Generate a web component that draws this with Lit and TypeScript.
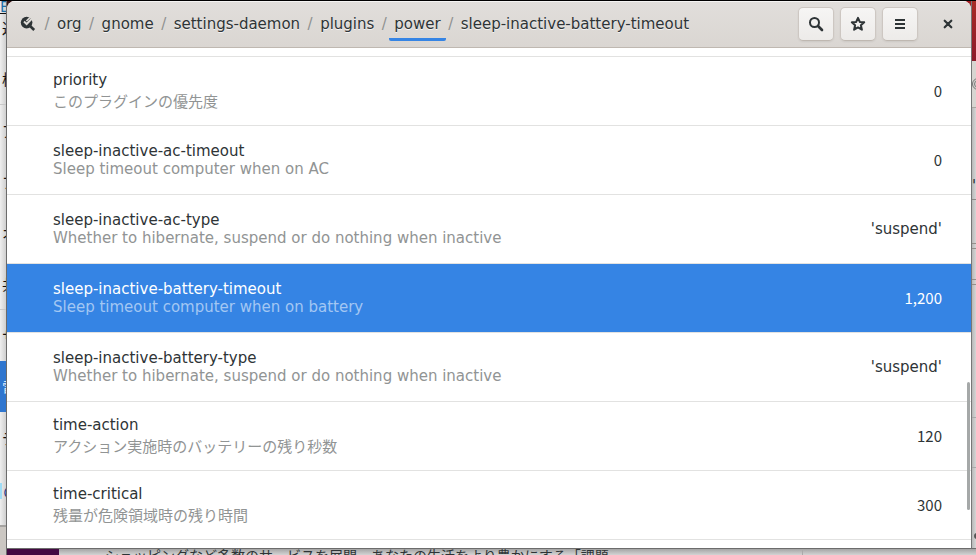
import { LitElement, html, css, svg } from "lit";
import { customElement, property } from "lit/decorators.js";
import { classMap } from "lit/directives/class-map.js";

interface Key {
  name: string;
  summary: string;
  value: string;
  selected?: boolean;
}

const KEYS: Key[] = [
  { name: "priority", summary: "このプラグインの優先度", value: "0" },
  { name: "sleep-inactive-ac-timeout", summary: "Sleep timeout computer when on AC", value: "0" },
  { name: "sleep-inactive-ac-type", summary: "Whether to hibernate, suspend or do nothing when inactive", value: "'suspend'" },
  { name: "sleep-inactive-battery-timeout", summary: "Sleep timeout computer when on battery", value: "1,200", selected: true },
  { name: "sleep-inactive-battery-type", summary: "Whether to hibernate, suspend or do nothing when inactive", value: "'suspend'" },
  { name: "time-action", summary: "アクション実施時のバッテリーの残り秒数", value: "120" },
  { name: "time-critical", summary: "残量が危険領域時の残り時間", value: "300" },
];

const PATH = ["org", "gnome", "settings-daemon", "plugins", "power", "sleep-inactive-battery-timeout"];

const PANELS = [
  { label: "通", first: true },
  { label: "検", last: true },
  { label: "ア" },
  { label: "プ" },
  { label: "オ" },
  { label: "共", last: true },
  { label: "サ" },
  { label: "電", active: true },
  { label: "デ" },
];

const icons = {
  root: svg`<circle cx="6.6" cy="6.6" r="5.8" fill="currentColor"/>
    <path d="M9.5 9.5 14.2 14" stroke="currentColor" stroke-width="2.6"/>
    <path d="M4 5.6 6.6 8 12.5 2" fill="none" stroke="#dedbd7" stroke-width="2"/>
    <path d="M6.4 5 10 1.6" stroke="#dedbd7" stroke-width="1.6"/>`,
  search: svg`<circle cx="6.5" cy="6.5" r="4.5" fill="none" stroke="currentColor" stroke-width="2"/>
    <path d="M10 10 14 14" stroke="currentColor" stroke-width="2.6" stroke-linecap="round"/>`,
  star: svg`<path d="M8 1.8 9.8 5.9 14.2 6.3 10.9 9.2 11.9 13.7 8 11.4 4.1 13.7 5.1 9.2 1.8 6.3 6.2 5.9Z" fill="none" stroke="currentColor" stroke-width="2" stroke-linejoin="round"/>`,
  menu: svg`<path d="M3 3h10v2H3zM3 7h10v2H3zM3 11h10v2H3z" fill="currentColor"/>`,
  close: svg`<path d="M4.7 4.7 11.3 11.3M11.3 4.7 4.7 11.3" stroke="currentColor" stroke-width="2.2" stroke-linecap="round"/>`,
};

const icon = (name: keyof typeof icons) =>
  html`<svg class="icon" viewBox="0 0 16 16" width="16" height="16" aria-hidden="true">${icons[name]}</svg>`;

@customElement("path-bar")
class PathBar extends LitElement {
  static styles = css`
    :host { display: flex; align-items: stretch; min-width: 0; }
    nav { display: flex; align-items: stretch; }
    .root, .crumb {
      display: flex;
      align-items: center;
      color: #2e3436;
      text-decoration: none;
      white-space: nowrap;
      text-shadow: 0 1px rgba(255, 255, 255, 0.7);
      border-block: 3px solid transparent;
      padding: 0 5px;
    }
    .root { padding-right: 6px; }
    .current { border-bottom-color: #3584e4; border-radius: 0 0 2px 2px; }
    .slash { display: flex; align-items: center; width: 10px; justify-content: center; color: #8f9190; }
    .icon { display: block; }
  `;

  render() {
    return html`<nav aria-label="Path">
      <a class="root" href="#/" aria-label="Root">${icon("root")}</a>
      ${PATH.map(
        (part) => html`<span class="slash">/</span
          ><a class=${classMap({ crumb: true, current: part === "power" })} href="#${part}">${part}</a>`,
      )}
    </nav>`;
  }
}

@customElement("key-row")
class KeyRow extends LitElement {
  @property({ attribute: false }) item!: Key;

  static styles = css`
    :host { display: block; border-top: 1px solid #e2e2e1; }
    .row {
      display: flex;
      align-items: center;
      gap: 24px;
      height: 68px;
      padding: 0 29px 0 46px;
      color: #2e3436;
    }
    .text { flex: 1; min-width: 0; line-height: 18px; }
    .cjk .text { line-height: 22px; }
    .name, .summary { white-space: nowrap; }
    .summary { color: #919494; }
    .number { font-family: "Noto Sans CJK JP", sans-serif; padding-bottom: 2px; }
    .selected { background: #3584e4; color: #fff; }
    .selected .summary { color: #a3c7f3; }
  `;

  render() {
    const { name, summary, value, selected = false } = this.item;
    return html`<div class=${classMap({ row: true, selected, cjk: summary.charCodeAt(0) > 255 })}>
      <div class="text">
        <div class="name">${name}</div>
        <div class="summary">${summary}</div>
      </div>
      <div class=${classMap({ number: /^\d/.test(value) })}>${value}</div>
    </div>`;
  }
}

@customElement("app-root")
class AppRoot extends LitElement {
  static styles = css`
    :host {
      display: block;
      font-family: "DejaVu Sans", "Noto Sans CJK JP", sans-serif;
      font-size: 15px;
      color: #2e3436;
    }
    .desktop {
      display: grid;
      grid-template-columns: 7px minmax(0, 1fr) 5px;
      grid-template-rows: auto 7px;
      min-height: 100vh;
      box-sizing: border-box;
      border-top: 1px solid #000;
      background: linear-gradient(to right, #3a1717 50%, #a01d22 50%) top / 100% 12px no-repeat #d0cfcd;
      overflow: hidden;
    }
    .panels {
      grid-row: 1 / 3;
      display: flex;
      flex-direction: column;
      overflow: hidden;
      background: linear-gradient(to right, #efefef, #cfcfcf);
      border-right: 1px solid #6b6b6b;
      white-space: nowrap;
      font-family: "Noto Sans CJK JP", sans-serif;
    }
    .link { height: 12px; line-height: 10px; border-bottom: 1px solid #111; color: #1c6fa8; }
    .panel {
      flex: none;
      height: 51px;
      line-height: 51px;
      padding-left: 2px;
      color: #111;
    }
    .first { height: 39px; line-height: 28px; }
    .last { border-bottom: 1px solid #c8c8c8; }
    .active { background: #2f76cf; color: #dce8f8; }
    .snippet {
      height: 16px;
      line-height: 16px;
      margin-top: 20px;
      padding-left: 3px;
      color: #2a3a8c;
      background: linear-gradient(to right, #9fdcf5 2px, transparent 2px);
    }
    .dock { margin-top: auto; height: 28px; border-top: 2px solid #a5a3a1; background: #cbc7c2; }

    .window {
      position: relative;
      background: #fff;
      border-radius: 8px 8px 0 0;
      overflow: hidden;
    }
    header {
      display: flex;
      align-items: stretch;
      height: 47px;
      box-sizing: border-box;
      padding: 6px 5px 6px 8px;
      background: linear-gradient(#e1dedb, #dad6d2);
      border-bottom: 1px solid #bfb8b1;
      box-shadow: inset 0 1px #f5f4f3;
    }
    path-bar { flex: 1; }
    .tools { display: flex; gap: 6px; }
    button {
      display: grid;
      place-items: center;
      width: 36px;
      padding: 0;
      border: 1px solid #cdc7c2;
      border-bottom-color: #bfb8b1;
      border-radius: 5px;
      background: linear-gradient(#f6f5f4, #edebe9);
      color: #2e3436;
      box-shadow: 0 1px 2px rgba(0, 0, 0, 0.07);
    }
    .close { margin-left: 6px; border-color: transparent; background: none; box-shadow: none; }
    .list { padding: 8px 0; }
    .end { border-top: 1px solid #e2e2e1; }
    .thumb {
      position: absolute;
      right: 1px;
      bottom: 38px;
      width: 3px;
      height: 128px;
      border-radius: 2px;
      background: #a5a8a8;
    }

    .right {
      display: flex;
      flex-direction: column;
      overflow: hidden;
      border-left: 1px solid #777;
      background: linear-gradient(to right, #b8b8b8, #d6d6d6);
    }
    .red { height: 60px; background: linear-gradient(#a82a26, #8c1a2a); }
    .tab { height: 46px; border-bottom: 1px solid #aaa5a0; display: flex; align-items: center; background: #d8d5d1; }
    .ring { flex: none; width: 6px; height: 6px; border: 3px double #777; border-radius: 50%; }
    .cell { height: 91px; line-height: 156px; border-bottom: 1px solid #8e8b89; }
    .field { height: 43px; border-bottom: 1px solid #958f8b; }
    .short { height: 30px; }
    .gap { height: 4px; border-bottom: 1px solid #958f8b; }
    .tall { height: 132px; border-bottom: 1px solid #aaa; }
    .low { height: 49px; border-bottom: 1px solid #aaa; }
    .dot { flex: none; width: 6px; height: 6px; margin: 65px 0 0 2px; border-radius: 50%; background: #555; }

    .behind {
      grid-column: 2 / 4;
      display: flex;
      overflow: hidden;
      border-top: 1px solid #6c6c6c;
      background: linear-gradient(#a5a5a5, #d4d4d4);
      white-space: nowrap;
      font-family: "Noto Sans CJK JP", sans-serif;
      font-size: 14px;
      line-height: 12px;
    }
    .purple { width: 52px; background: #430a42; }
    .article { width: 697px; padding-left: 46px; border-right: 1px solid #aaa; }
  `;

  render() {
    return html`<div class="desktop">
      <div class="panels">
        <div class="link">E</div>
        ${PANELS.map(
          (p) =>
            html`<div class=${classMap({ panel: true, first: !!p.first, last: !!p.last, active: !!p.active })}>${p.label}</div>`,
        )}
        <div class="snippet">の</div>
        <div class="dock"></div>
      </div>
      <main class="window">
        <header>
          <path-bar></path-bar>
          <div class="tools">
            <button aria-label="Search">${icon("search")}</button>
            <button aria-label="Bookmarks">${icon("star")}</button>
            <button aria-label="Menu">${icon("menu")}</button>
            <button class="close" aria-label="Close">${icon("close")}</button>
          </div>
        </header>
        <div class="list">
          ${KEYS.map((item) => html`<key-row .item=${item}></key-row>`)}
          <div class="end"></div>
        </div>
        <div class="thumb"></div>
      </main>
      <div class="right">
        <div class="red"></div>
        <div class="tab"><span class="ring"></span></div>
        <div class="cell">'</div>
        <div class="field"></div>
        <div class="gap"></div>
        <div class="field short"></div>
        <div class="gap"></div>
        <div class="tall"></div>
        <div class="low"></div>
        <div class="dot"></div>
      </div>
      <div class="behind">
        <div class="purple"></div>
        <div class="article">ショッピングなど多数のサービスを展開。あなたの生活をより豊かにする「課題</div>
      </div>
    </div>`;
  }
}
